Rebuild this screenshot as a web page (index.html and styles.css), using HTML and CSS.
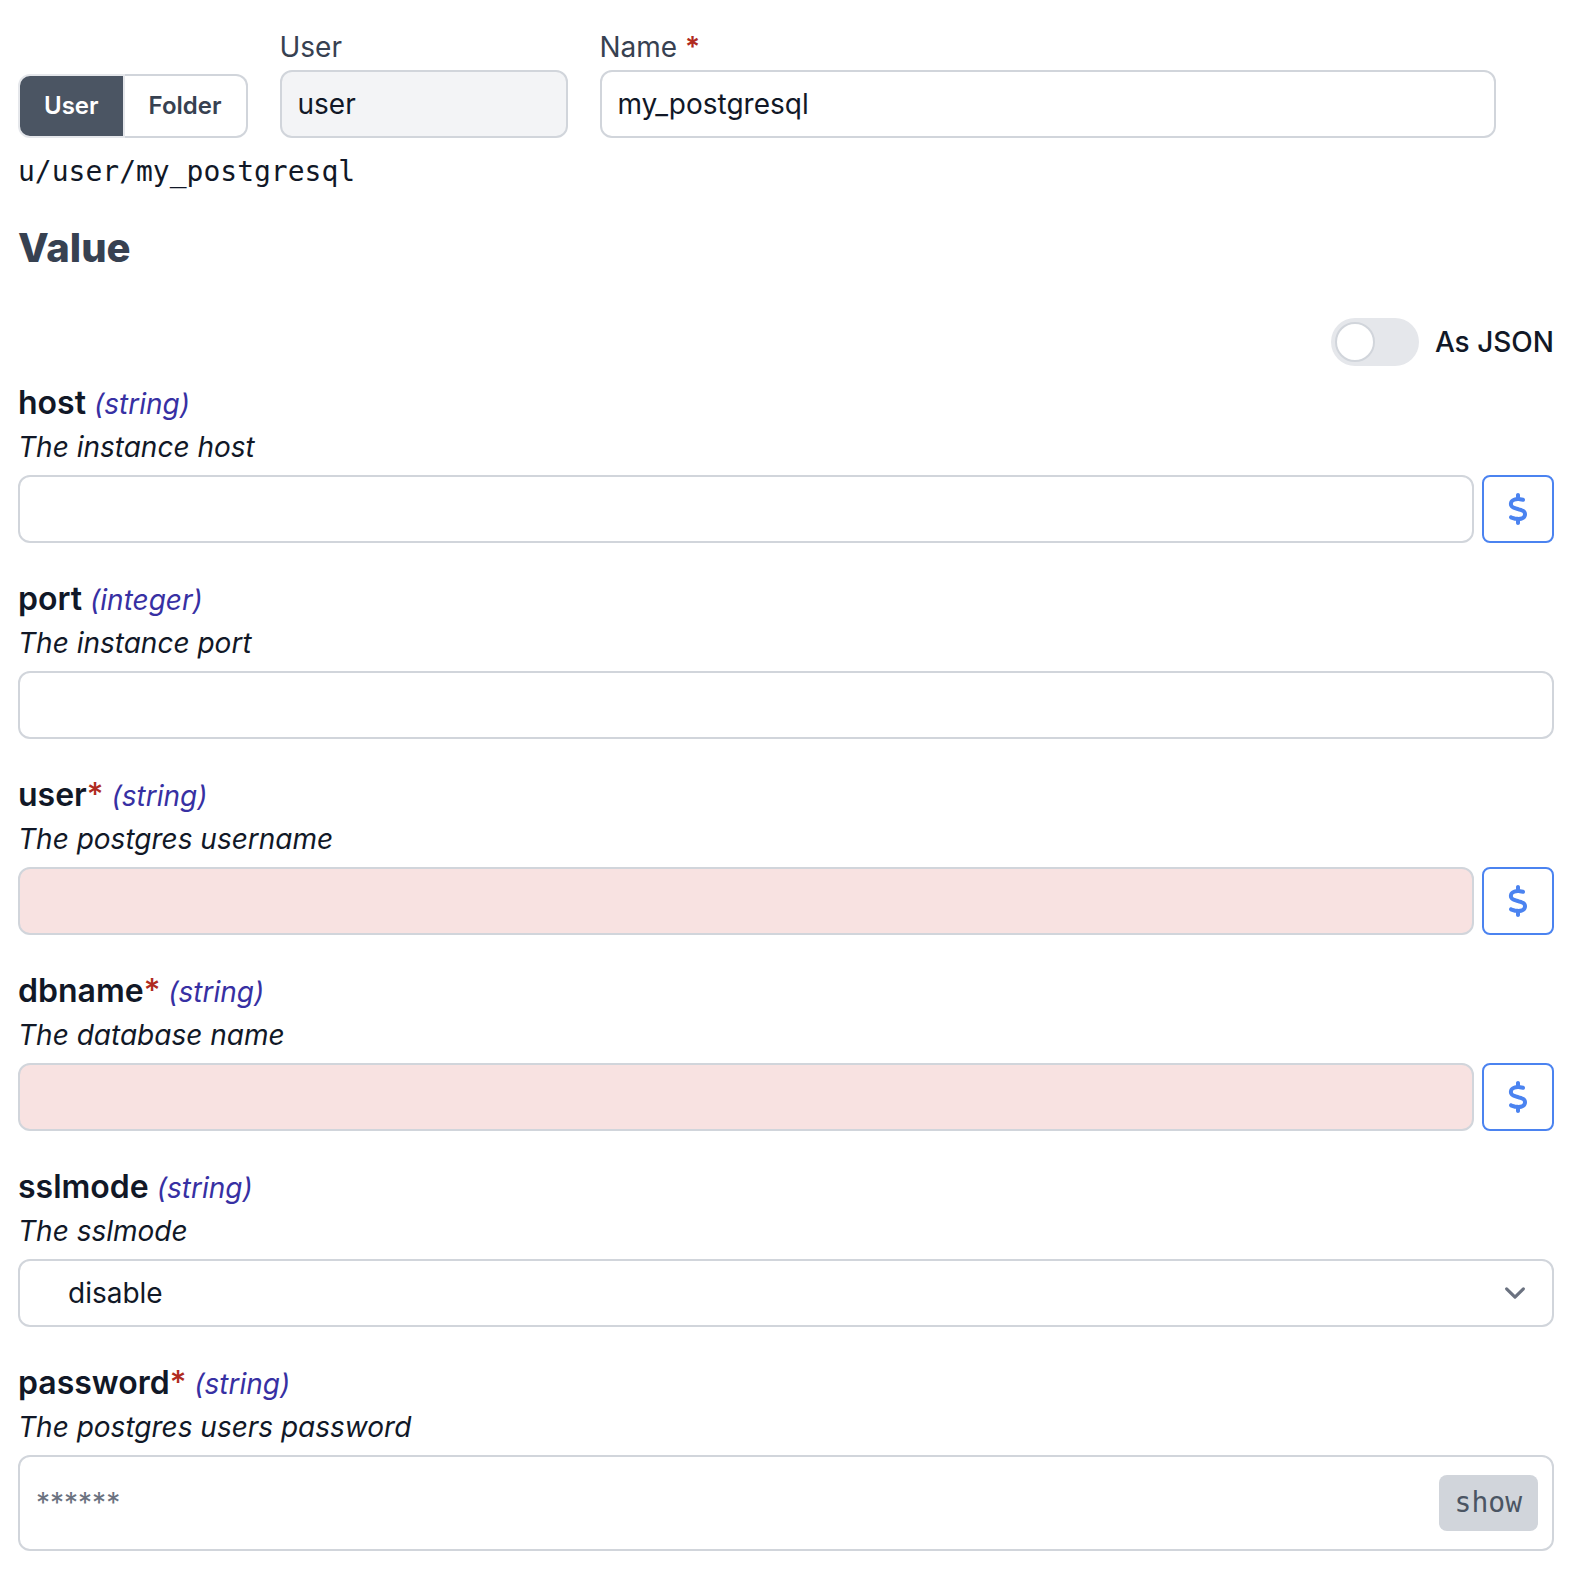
FILE: index.html
```html
<!DOCTYPE html>
<html lang="en">
<head>
<meta charset="utf-8">
<title>PostgreSQL resource</title>
<link rel="stylesheet" href="styles.css">
</head>
<body>
<svg class="sprite" aria-hidden="true">
  <symbol id="dollar" viewBox="0 0 320 512"><path d="M160 0c17.7 0 32 14.3 32 32V67.7c1.6 .2 3.1 .4 4.7 .7c.4 .1 .7 .1 1.1 .2l48 8.8c17.4 3.2 28.9 19.9 25.7 37.2s-19.9 28.9-37.2 25.7l-47.5-8.7c-31.3-4.6-58.9-1.5-78.3 6.2s-27.2 18.3-29 28.1c-2 10.7-.5 16.7 1.2 20.4c1.8 3.9 5.5 8.3 12.8 13.2c16.3 10.7 41.3 17.7 73.7 26.3l2.9 .8c28.6 7.6 63.6 16.8 89.6 33.8c14.2 9.3 27.6 21.9 35.9 39.5c8.5 17.9 10.3 37.9 6.4 59.2c-6.9 38-33.1 63.4-65.6 76.7c-13.7 5.6-28.6 9.2-44.4 11V480c0 17.7-14.3 32-32 32s-32-14.3-32-32V445.1c-.4-.1-.9-.1-1.3-.2l-.2 0 0 0c-24.4-3.8-64.5-14.3-91.5-26.3c-16.1-7.2-23.4-26.1-16.2-42.2s26.1-23.4 42.2-16.2c20.9 9.3 55.3 18.5 75.2 21.6c31.9 4.7 58.2 2 76-5.3c16.9-6.9 24.6-16.9 26.8-28.9c1.9-10.6 .4-16.7-1.3-20.4c-1.9-4-5.6-8.4-13-13.3c-16.4-10.7-41.5-17.7-74-26.3l-2.8-.7 0 0C119.4 279.3 84.4 270 58.4 253c-14.2-9.3-27.5-22-35.8-39.6c-8.4-17.9-10.1-37.9-6.1-59.2C23.7 116 52.3 91.2 84.8 78.3c13.3-5.3 27.9-8.9 43.2-11V32c0-17.7 14.3-32 32-32z"/></symbol>
</svg>
<main class="page">
  <form>
    <div class="owner">
      <div class="segments" role="group" aria-label="Owner kind">
        <button type="button" class="segment segment-on" aria-pressed="true">User</button>
        <button type="button" class="segment" aria-pressed="false">Folder</button>
      </div>
      <div class="owner-field owner-user">
        <label class="caption" for="owner">User</label>
        <input class="control" id="owner" type="text" value="user" disabled>
      </div>
      <div class="owner-field owner-name">
        <label class="caption" for="name">Name <span class="required-bold">*</span></label>
        <input class="control" id="name" type="text" value="my_postgresql">
      </div>
    </div>
    <p class="path">u/user/my_postgresql</p>

    <h2 class="heading">Value</h2>
    <label class="json-switch">
      <input class="switch" type="checkbox" role="switch">
      <span>As JSON</span>
    </label>

    <div class="fields">
      <div class="field">
        <label class="field-label" for="f-host">host <span class="type">(string)</span></label>
        <p class="hint">The instance host</p>
        <div class="row">
          <input class="control" id="f-host" type="text">
          <button type="button" class="variable" aria-label="Insert variable"><svg class="dollar"><use href="#dollar"/></svg></button>
        </div>
      </div>
      <div class="field">
        <label class="field-label" for="f-port">port <span class="type">(integer)</span></label>
        <p class="hint">The instance port</p>
        <div class="row"><input class="control" id="f-port" type="text" inputmode="numeric"></div>
      </div>
      <div class="field">
        <label class="field-label" for="f-user">user<span class="required">*</span> <span class="type">(string)</span></label>
        <p class="hint">The postgres username</p>
        <div class="row">
          <input class="control control-missing" id="f-user" type="text">
          <button type="button" class="variable" aria-label="Insert variable"><svg class="dollar"><use href="#dollar"/></svg></button>
        </div>
      </div>
      <div class="field">
        <label class="field-label" for="f-dbname">dbname<span class="required">*</span> <span class="type">(string)</span></label>
        <p class="hint">The database name</p>
        <div class="row">
          <input class="control control-missing" id="f-dbname" type="text">
          <button type="button" class="variable" aria-label="Insert variable"><svg class="dollar"><use href="#dollar"/></svg></button>
        </div>
      </div>
      <div class="field">
        <label class="field-label" for="f-sslmode">sslmode <span class="type">(string)</span></label>
        <p class="hint">The sslmode</p>
        <div class="row select-wrap">
          <select class="control select" id="f-sslmode"><option>disable</option></select>
          <svg class="chevron" viewBox="0 0 20 20" aria-hidden="true"><path d="M6 8l4 4 4-4"/></svg>
        </div>
      </div>
      <div class="field">
        <label class="field-label" for="f-password">password<span class="required">*</span> <span class="type">(string)</span></label>
        <p class="hint">The postgres users password</p>
        <div class="secret">
          <input class="secret-input" id="f-password" type="password" placeholder="******">
          <button type="button" class="show">show</button>
        </div>
      </div>
    </div>
  </form>
</main>
</body>
</html>
```
FILE: styles.css
```css
*, *::before, *::after { box-sizing: border-box; }

body {
  margin: 0;
  background: #fff;
  color: #111827;
  font-family: Inter, "Liberation Sans", sans-serif;
  font-size: 28px;
  line-height: 40px;
}

p, h2 { margin: 0; }
input, select, button { margin: 0; font: inherit; color: inherit; }
button { cursor: pointer; }

.sprite { display: none; }
.page { padding: 27px 18px 20px; }

/* Owner, name and resulting path */
.owner { display: flex; align-items: flex-end; gap: 32px; }
.segments { display: flex; flex: none; }
.segment {
  height: 64px;
  padding: 0 24px;
  border: 2px solid #d1d5db;
  border-left: 0;
  border-radius: 0 12px 12px 0;
  background: #fff;
  color: #374151;
  font-size: 24px;
  font-weight: 600;
}
.segment-on {
  border: 2px solid #e5e7eb;
  border-radius: 12px 0 0 12px;
  background: #4b5563;
  color: #fff;
}
.owner-field { display: flex; flex-direction: column; gap: 3px; }
.owner-user { flex: 0 0 288px; }
.owner-name { flex: 1; max-width: 896px; }
.caption { color: #374151; }
.required { color: #b02a20; font-weight: 500; }
.required-bold { color: #b02a20; font-weight: 600; }
.path {
  margin-top: 14px;
  font-family: "DejaVu Sans Mono", monospace;
}

.control {
  flex: 1;
  width: 100%;
  min-width: 0;
  min-height: 68px;
  padding: 0 16px;
  border: 2px solid #d1d5db;
  border-radius: 12px;
  background: #fff;
}
.control:disabled { background: #f3f4f6; opacity: 1; }
.control-missing { background: #f8e2e1; }

.heading {
  margin-top: 32px;
  color: #374151;
  font-size: 40px;
  font-weight: 800;
  line-height: 48px;
}

/* JSON toggle */
.json-switch {
  display: flex;
  align-items: center;
  justify-content: flex-end;
  gap: 16px;
  margin-top: 46px;
  font-weight: 500;
}
.switch {
  appearance: none;
  display: flex;
  width: 88px;
  height: 48px;
  padding: 4px;
  border-radius: 24px;
  background: #e5e7eb;
}
.switch::before {
  content: "";
  width: 40px;
  height: 40px;
  border: 2px solid #d1d5db;
  border-radius: 50%;
  background: #fff;
}
.switch:checked { justify-content: flex-end; background: #4b83f0; }

/* Resource fields */
.fields { display: flex; flex-direction: column; gap: 32px; margin-top: 13px; }
.field { display: flex; flex-direction: column; }
.field-label { font-size: 32px; font-weight: 600; line-height: 48px; }
.type {
  color: #3730a3;
  font-size: 28px;
  font-weight: 400;
  font-style: oblique 20deg;
  line-height: 28px;
}
.hint { margin-bottom: 8px; font-style: oblique 20deg; }
.row { display: flex; gap: 8px; }
.variable {
  display: flex;
  align-items: center;
  justify-content: center;
  width: 72px;
  padding: 0;
  border: 2px solid #4b83f0;
  border-radius: 8px;
  background: #fff;
  color: #4b83f0;
}
.dollar { width: 20px; height: 32px; fill: currentColor; }

.select-wrap { position: relative; }
.select { appearance: none; padding: 0 80px 0 48px; }
.chevron {
  position: absolute;
  top: 13px;
  right: 18px;
  width: 42px;
  height: 42px;
  fill: none;
  stroke: #6b7280;
  stroke-width: 1.5;
  stroke-linecap: round;
  stroke-linejoin: round;
  pointer-events: none;
}

.secret {
  display: flex;
  align-items: center;
  gap: 16px;
  padding: 18px 14px 18px 16px;
  border: 2px solid #d1d5db;
  border-radius: 12px;
}
.secret-input {
  flex: 1;
  min-width: 0;
  height: 56px;
  padding: 0;
  border: 0;
  background: transparent;
  outline: none;
}
.secret-input::placeholder { color: #6b7280; opacity: 1; }
.show {
  height: 56px;
  padding: 0 16px;
  border: 0;
  border-radius: 8px;
  background: #d1d5db;
  color: #4b5563;
  font-family: "DejaVu Sans Mono", monospace;
}
```
